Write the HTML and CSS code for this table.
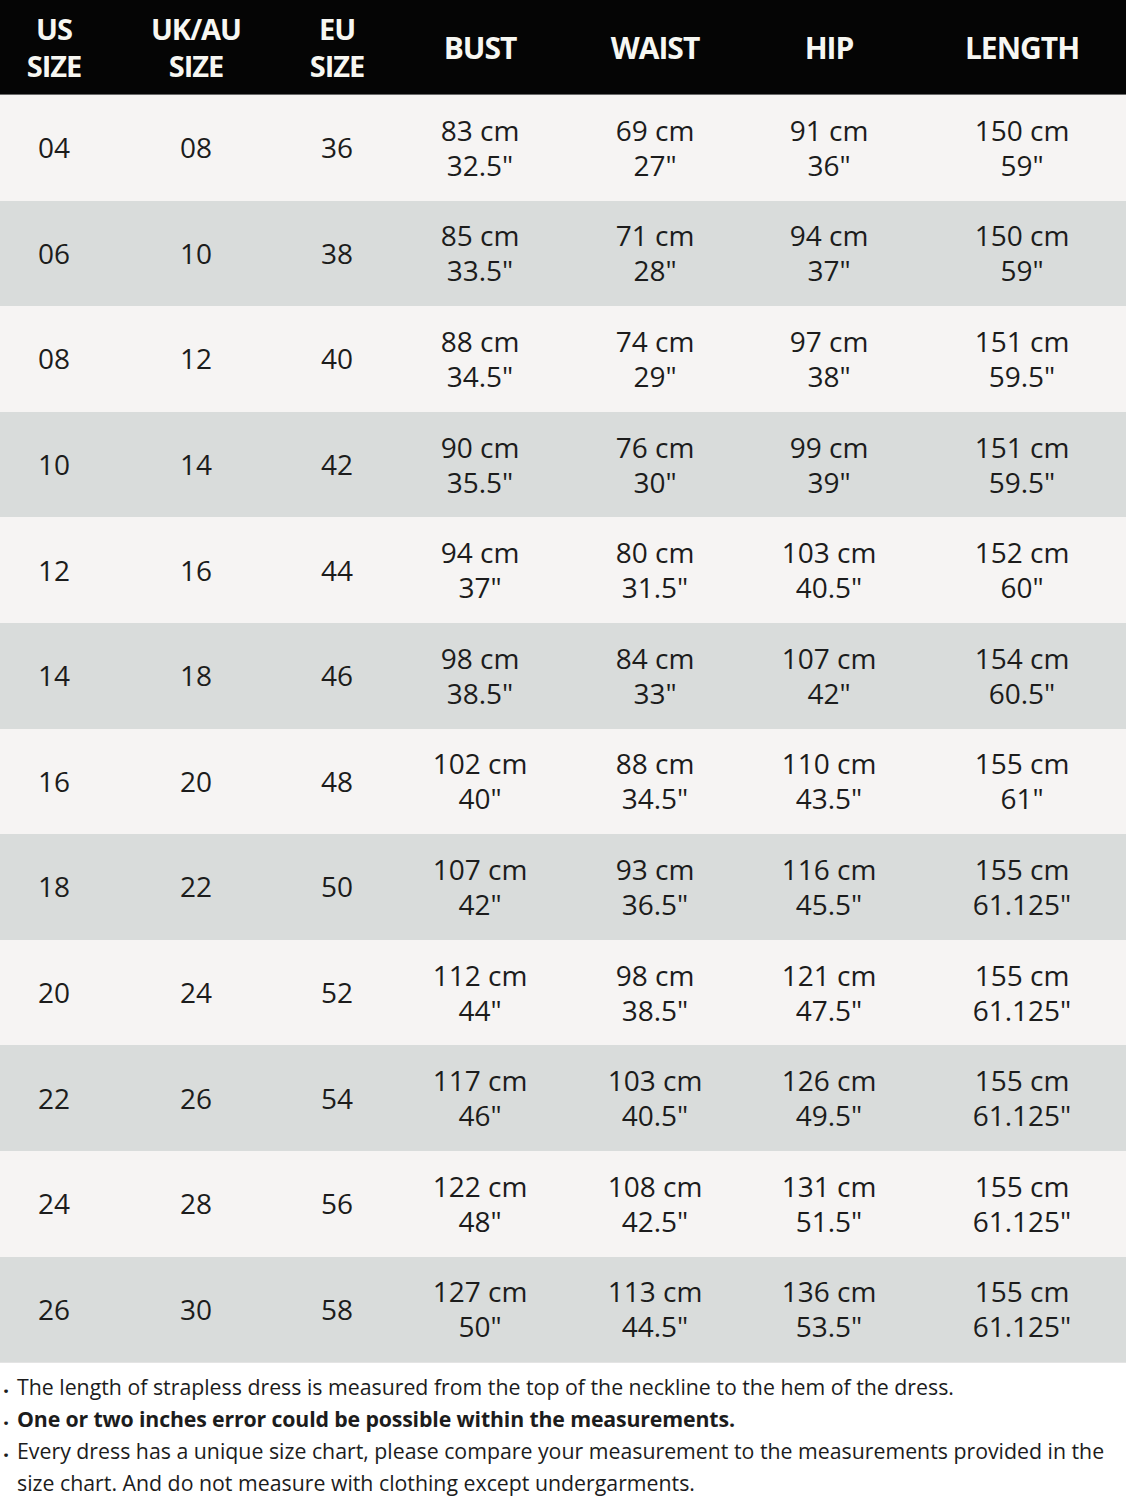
FILE: index.html
```html
<!DOCTYPE html>
<html>
<head>
<meta charset="utf-8">
<link rel="stylesheet" href="styles.css">
</head>
<body>
<div class="chart">
  <div class="row head">
    <div class="cell"><span>US</span><span>SIZE</span></div>
    <div class="cell"><span>UK/AU</span><span>SIZE</span></div>
    <div class="cell"><span>EU</span><span>SIZE</span></div>
    <div class="cell big">BUST</div>
    <div class="cell big">WAIST</div>
    <div class="cell big">HIP</div>
    <div class="cell big">LENGTH</div>
  </div>
  <div class="row light"><div class="cell">04</div><div class="cell">08</div><div class="cell">36</div><div class="cell"><span>83 cm</span><span>32.5"</span></div><div class="cell"><span>69 cm</span><span>27"</span></div><div class="cell"><span>91 cm</span><span>36"</span></div><div class="cell"><span>150 cm</span><span>59"</span></div></div>
  <div class="row dark"><div class="cell">06</div><div class="cell">10</div><div class="cell">38</div><div class="cell"><span>85 cm</span><span>33.5"</span></div><div class="cell"><span>71 cm</span><span>28"</span></div><div class="cell"><span>94 cm</span><span>37"</span></div><div class="cell"><span>150 cm</span><span>59"</span></div></div>
  <div class="row light"><div class="cell">08</div><div class="cell">12</div><div class="cell">40</div><div class="cell"><span>88 cm</span><span>34.5"</span></div><div class="cell"><span>74 cm</span><span>29"</span></div><div class="cell"><span>97 cm</span><span>38"</span></div><div class="cell"><span>151 cm</span><span>59.5"</span></div></div>
  <div class="row dark"><div class="cell">10</div><div class="cell">14</div><div class="cell">42</div><div class="cell"><span>90 cm</span><span>35.5"</span></div><div class="cell"><span>76 cm</span><span>30"</span></div><div class="cell"><span>99 cm</span><span>39"</span></div><div class="cell"><span>151 cm</span><span>59.5"</span></div></div>
  <div class="row light"><div class="cell">12</div><div class="cell">16</div><div class="cell">44</div><div class="cell"><span>94 cm</span><span>37"</span></div><div class="cell"><span>80 cm</span><span>31.5"</span></div><div class="cell"><span>103 cm</span><span>40.5"</span></div><div class="cell"><span>152 cm</span><span>60"</span></div></div>
  <div class="row dark"><div class="cell">14</div><div class="cell">18</div><div class="cell">46</div><div class="cell"><span>98 cm</span><span>38.5"</span></div><div class="cell"><span>84 cm</span><span>33"</span></div><div class="cell"><span>107 cm</span><span>42"</span></div><div class="cell"><span>154 cm</span><span>60.5"</span></div></div>
  <div class="row light"><div class="cell">16</div><div class="cell">20</div><div class="cell">48</div><div class="cell"><span>102 cm</span><span>40"</span></div><div class="cell"><span>88 cm</span><span>34.5"</span></div><div class="cell"><span>110 cm</span><span>43.5"</span></div><div class="cell"><span>155 cm</span><span>61"</span></div></div>
  <div class="row dark"><div class="cell">18</div><div class="cell">22</div><div class="cell">50</div><div class="cell"><span>107 cm</span><span>42"</span></div><div class="cell"><span>93 cm</span><span>36.5"</span></div><div class="cell"><span>116 cm</span><span>45.5"</span></div><div class="cell"><span>155 cm</span><span>61.125"</span></div></div>
  <div class="row light"><div class="cell">20</div><div class="cell">24</div><div class="cell">52</div><div class="cell"><span>112 cm</span><span>44"</span></div><div class="cell"><span>98 cm</span><span>38.5"</span></div><div class="cell"><span>121 cm</span><span>47.5"</span></div><div class="cell"><span>155 cm</span><span>61.125"</span></div></div>
  <div class="row dark"><div class="cell">22</div><div class="cell">26</div><div class="cell">54</div><div class="cell"><span>117 cm</span><span>46"</span></div><div class="cell"><span>103 cm</span><span>40.5"</span></div><div class="cell"><span>126 cm</span><span>49.5"</span></div><div class="cell"><span>155 cm</span><span>61.125"</span></div></div>
  <div class="row light"><div class="cell">24</div><div class="cell">28</div><div class="cell">56</div><div class="cell"><span>122 cm</span><span>48"</span></div><div class="cell"><span>108 cm</span><span>42.5"</span></div><div class="cell"><span>131 cm</span><span>51.5"</span></div><div class="cell"><span>155 cm</span><span>61.125"</span></div></div>
  <div class="row dark"><div class="cell">26</div><div class="cell">30</div><div class="cell">58</div><div class="cell"><span>127 cm</span><span>50"</span></div><div class="cell"><span>113 cm</span><span>44.5"</span></div><div class="cell"><span>136 cm</span><span>53.5"</span></div><div class="cell"><span>155 cm</span><span>61.125"</span></div></div>
</div>
<ul class="notes">
  <li>The length of strapless dress is measured from the top of the neckline to the hem of the dress.</li>
  <li class="strong">One or two inches error could be possible within the measurements.</li>
  <li>Every dress has a unique size chart, please compare your measurement to the measurements provided in the size chart. And do not measure with clothing except undergarments.</li>
</ul>
</body>
</html>
```
FILE: styles.css
```css
html, body {
  margin: 0;
  padding: 0;
  background: #ffffff;
}
body {
  width: 1126px;
  font-family: "Open Sans", "Noto Sans", sans-serif;
  color: #1c1c1c;
}
.chart {
  display: flex;
  flex-direction: column;
}
.row {
  display: grid;
  grid-template-columns: 108px 176px 106px 180px 170px 178px 1fr;
  height: 105.6px;
}
.row.head {
  height: 94px;
  background: #050505;
  color: #f7f7f2;
  border-bottom: 1px solid #6a6a6a;
  font-weight: 700;
  font-size: 29px;
  line-height: 37px;
  letter-spacing: -1px;
}
.row.head .big { font-size: 30px; }
.row.light { background: #f6f4f3; }
.row.dark { background: #d9dcdb; }
.cell {
  display: flex;
  flex-direction: column;
  align-items: center;
  justify-content: center;
  text-align: center;
  font-size: 28px;
  line-height: 35px;
  white-space: nowrap;
}
.row.head .cell { font-size: inherit; line-height: inherit; }
.row.head .cell.big { font-size: 30px; }
.notes {
  list-style: none;
  margin: 0;
  padding: 8px 0 0 0;
  border-top: 1px solid #e4e4e4;
  font-size: 21.3px;
  line-height: 32px;
  color: #1c1c1c;
}
.notes li {
  position: relative;
  padding-left: 17px;
  padding-right: 20px;
}
.notes li::before {
  content: ".";
  position: absolute;
  left: 3px;
  top: -2px;
  font-weight: 700;
}
.notes li.strong {
  font-weight: 700;
  letter-spacing: -0.15px;
}
```
